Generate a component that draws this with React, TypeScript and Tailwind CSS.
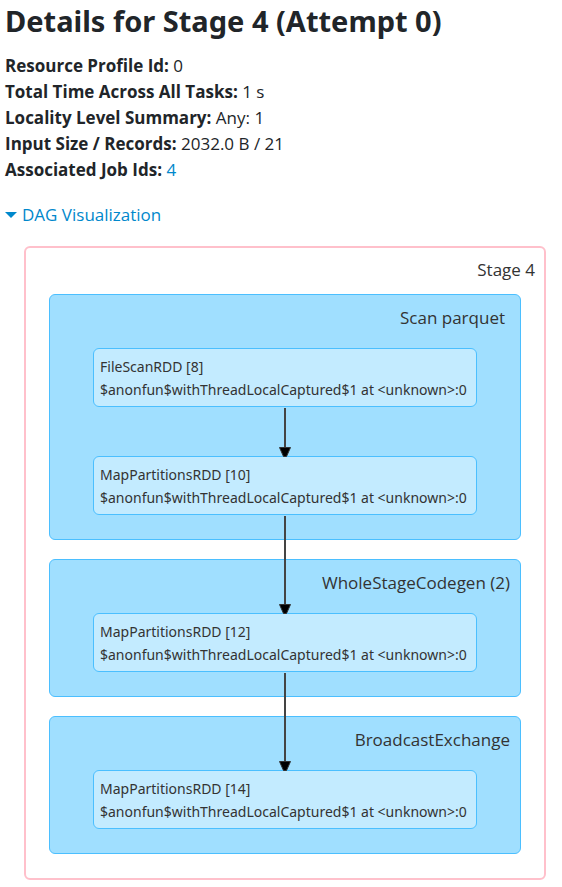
import type { ReactNode } from "react";

type RddNode = { name: string; id: number; callsite: string };
type Cluster = { label: string; labelInset?: "wide"; nodes: RddNode[] };

const CALLSITE = "$anonfun$withThreadLocalCaptured$1 at <unknown>:0";

const clusters: Cluster[] = [
  {
    label: "Scan parquet",
    labelInset: "wide",
    nodes: [
      { name: "FileScanRDD", id: 8, callsite: CALLSITE },
      { name: "MapPartitionsRDD", id: 10, callsite: CALLSITE },
    ],
  },
  { label: "WholeStageCodegen (2)", nodes: [{ name: "MapPartitionsRDD", id: 12, callsite: CALLSITE }] },
  { label: "BroadcastExchange", nodes: [{ name: "MapPartitionsRDD", id: 14, callsite: CALLSITE }] },
];

function SummaryItem({ label, children }: { label: string; children: ReactNode }) {
  return (
    <li>
      <strong className="font-bold">{label}:</strong> {children}
    </li>
  );
}

// Edge that ends at the top of the node it is drawn in.
function Edge({ long }: { long: boolean }) {
  return (
    <div
      aria-hidden="true"
      className={`absolute bottom-full left-1/2 z-10 flex w-3 -translate-x-1/2 flex-col items-center ${long ? "h-[98px]" : "h-[49px]"}`}
    >
      <div className="w-[2px] flex-1 bg-[#444]" />
      <svg className="block h-[10px] w-3 shrink-0" viewBox="0 0 12 10">
        <path d="M0.5 0.5H11.5L7.5 9.5H4.5Z" fill="#000" stroke="#333" strokeWidth="1" />
      </svg>
    </div>
  );
}

function RddBox({ node, edge }: { node: RddNode; edge: "none" | "short" | "long" }) {
  return (
    <div className="relative h-[59px] rounded-md border border-[#4bbfff] bg-[#c3ebff] px-1.5 pt-1.5 font-['Noto_Sans','Open_Sans',sans-serif] text-sm leading-[23px] text-[#333]">
      {edge !== "none" && <Edge long={edge === "long"} />}
      <p className="whitespace-nowrap">
        {node.name} [{node.id}]
      </p>
      <p className="whitespace-nowrap">{node.callsite}</p>
    </div>
  );
}

export default function App() {
  return (
    <main className="bg-white pt-[3px] pr-4 pb-2 pl-[5px] font-['Open_Sans','Noto_Sans',sans-serif] text-[17px] leading-[26px] text-[#212529]">
      <h1 className="font-['Noto_Sans','Open_Sans',sans-serif] text-[29px] leading-9 font-bold">
        Details for Stage 4 (Attempt 0)
      </h1>
      <ul className="mt-3.5">
        <SummaryItem label="Resource Profile Id">0</SummaryItem>
        <SummaryItem label="Total Time Across All Tasks">1 s</SummaryItem>
        <SummaryItem label="Locality Level Summary">Any: 1</SummaryItem>
        <SummaryItem label="Input Size / Records">2032.0 B / 21</SummaryItem>
        <SummaryItem label="Associated Job Ids">
          <a href="#job-4" className="text-[#0088cc]">4</a>
        </SummaryItem>
      </ul>
      <button type="button" aria-expanded="true" className="mt-[19px] flex items-center gap-[5px] text-[#0088cc]">
        <svg className="h-1.5 w-3" viewBox="0 0 12 6" aria-hidden="true">
          <path d="M0 0H12L6 6Z" fill="currentColor" />
        </svg>
        DAG Visualization
      </button>

      <section className="mt-[18px] ml-[19px] rounded-md border-2 border-[#ffc0cb] px-[23px] pb-6 text-[#333]">
        <h2 className="-mr-3.5 flex h-[46px] items-center justify-end pb-0.5">Stage 4</h2>
        <div className="flex flex-col gap-[19px]">
          {clusters.map((cluster, c) => (
            <section key={cluster.label} className="rounded-md border border-[#4bbfff] bg-[#a0dfff] pb-6">
              <h3
                className={`flex h-[53px] items-center justify-end pb-2 ${cluster.labelInset === "wide" ? "pr-[15px]" : "pr-2.5"}`}
              >
                {cluster.label}
              </h3>
              <div className="mx-[43px] flex flex-col gap-[49px]">
                {cluster.nodes.map((node, n) => (
                  <RddBox key={node.id} node={node} edge={n > 0 ? "short" : c > 0 ? "long" : "none"} />
                ))}
              </div>
            </section>
          ))}
        </div>
      </section>
    </main>
  );
}
